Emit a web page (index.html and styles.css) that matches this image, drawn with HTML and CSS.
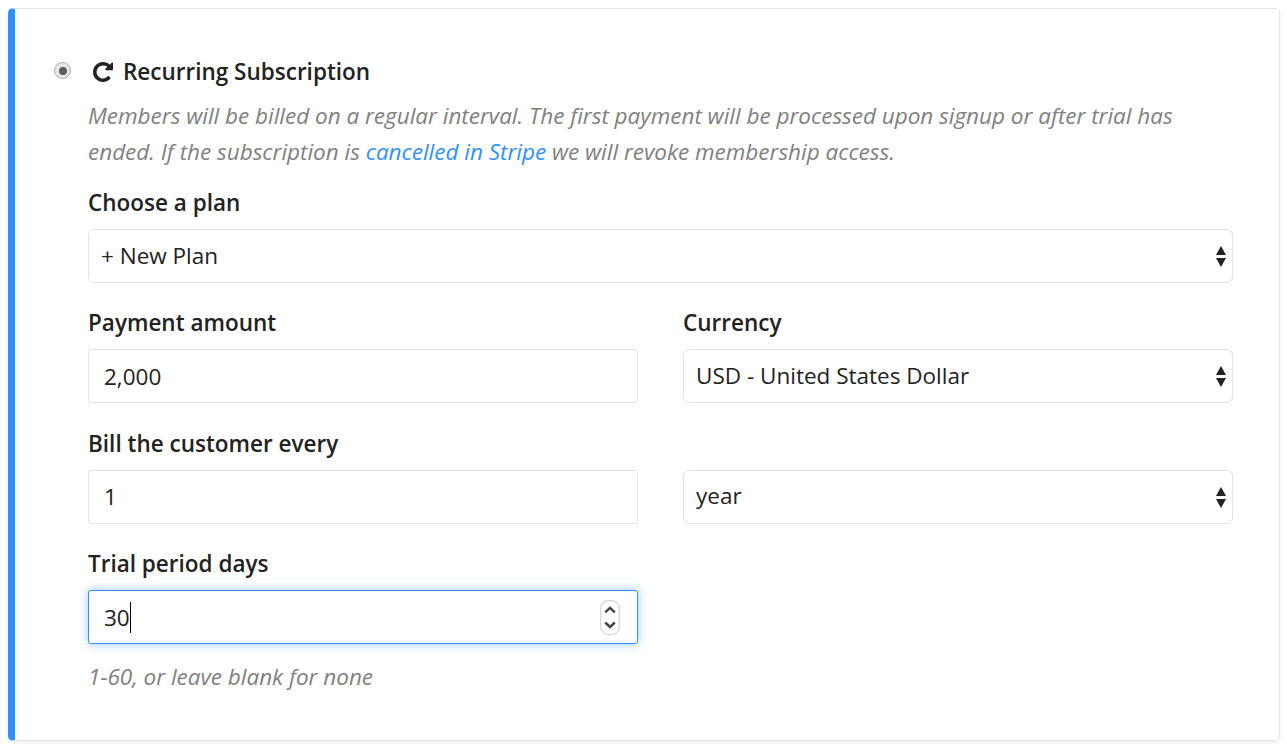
FILE: index.html
```html
<!DOCTYPE html>
<html lang="en">
<head>
    <meta charset="UTF-8">
    <meta name="viewport" content="width=device-width, initial-scale=1.0">
    <title>Subscription</title>
    <link rel="stylesheet" href="styles.css">
</head>
<body>
    <form class="card">
        <label class="option">
            <span class="radio"></span>
            <svg class="repeat-icon" viewBox="0 0 1536 1536" width="20" height="20">
                <path d="M1536 90v470q0 26-19 45t-45 19h-470q-42 0-59-40-17-39 14-69l148-148Q969 276 768 276q-104 0-190 38.500T420 420 314.500 578 276 768t38.500 190T420 1116t158 105.500T768 1260q119 0 215-48t169-143q7-10 23-12 15 0 25 9l147 138q9 8 9.500 20.500t-7.500 22.500q-109 142-264 215.500T768 1536q-156 0-298-61t-245-164-164-245T0 768t61-298 164-245T470 61 768 0q147 0 284.500 55.500T1297 212l130-152q29-31 70-14 39 17 39 44z"/>
            </svg>
            <span class="option-title">Recurring Subscription</span>
        </label>
        <div class="option-body">
            <p class="help">Members will be billed on a regular interval. The first payment will be processed upon signup or after trial has ended. If the subscription is <a href="#">cancelled in Stripe</a> we will revoke membership access.</p>

            <div class="field">
                <label class="label">Choose a plan</label>
                <div class="select"><select><option>+ New Plan</option></select></div>
            </div>

            <div class="row">
                <div class="field">
                    <label class="label">Payment amount</label>
                    <input class="input" type="text" value="2,000">
                </div>
                <div class="field">
                    <label class="label">Currency</label>
                    <div class="select"><select><option>USD - United States Dollar</option></select></div>
                </div>
            </div>

            <div class="row">
                <div class="field">
                    <label class="label">Bill the customer every</label>
                    <input class="input" type="text" value="1">
                </div>
                <div class="field field-end">
                    <div class="select"><select><option>year</option></select></div>
                </div>
            </div>

            <div class="row">
                <div class="field">
                    <label class="label">Trial period days</label>
                    <div class="input input-active">
                        <span class="value">30</span>
                        <svg class="spinner" viewBox="0 0 20 35" width="20" height="35">
                            <rect x=".75" y=".75" width="18.500" height="33.500" rx="7"/>
                            <path d="M5.200 12.300l4.800-4.500 4.800 4.500M5.200 22.500l4.800 4.500 4.800-4.500"/>
                        </svg>
                    </div>
                </div>
            </div>
            <p class="help hint">1-60, or leave blank for none</p>
        </div>
    </form>
</body>
</html>
```

FILE: styles.css
```css
* {
    box-sizing: border-box;
}

body {
    margin: 0;
    padding: 8px 7px 8px 8px;
    background: #fff;
    color: #222;
    font-family: "Open Sans", sans-serif;
    font-size: 22.5px;
    line-height: 36px;
}

.card {
    height: 733px;
    padding: 45px 46px 0 39px;
    border: 1px solid #e2e3e3;
    border-left: 7px solid #2f90ff;
    border-radius: 5px;
    box-shadow: 0 2px 4px rgba(0, 0, 0, 0.06);
}

.option {
    display: flex;
    align-items: center;
}

.radio {
    display: flex;
    align-items: center;
    justify-content: center;
    width: 17px;
    height: 17px;
    margin-bottom: 3px;
    border: 1px solid #aaa;
    border-radius: 50%;
    background: #e6e6e6;
}

.radio::after {
    content: "";
    width: 8px;
    height: 8px;
    border-radius: 50%;
    background: #5c5c5c;
}

.repeat-icon {
    margin: 0 10px 1px 22px;
    fill: #222;
}

.option-title, .label {
    font-weight: 600;
}

.option-body {
    padding-left: 34px;
}

.help {
    margin: 8px 0 15px;
    color: #808080;
    font-style: italic;
    letter-spacing: -0.016px;
}

.help a {
    color: #2f90ff;
    text-decoration: none;
}

.label {
    display: block;
    margin-bottom: 8px;
}

.row {
    display: grid;
    grid-template-columns: 1fr 1fr;
    column-gap: 45px;
    margin-top: 22.4px;
}

.field-end {
    align-self: end;
}

.input, .select select {
    display: block;
    width: 100%;
    height: 54px;
    margin: 0;
    padding: 0 15px;
    border: 1px solid #e2e3e3;
    border-radius: 3px;
    outline: none;
    background: #fff;
    color: #222;
    font: inherit;
}

.select {
    position: relative;
}

.select select {
    appearance: none;
    padding: 0 12px 1px;
    border-radius: 6px;
}

.select::before, .select::after {
    content: "";
    position: absolute;
    right: 7px;
    border-left: 5.5px solid transparent;
    border-right: 5.5px solid transparent;
}

.select::before {
    top: 17px;
    border-bottom: 9px solid #222;
}

.select::after {
    top: 29px;
    border-top: 9px solid #222;
}

.input-active {
    display: flex;
    align-items: center;
    justify-content: space-between;
    padding-right: 17px;
    border-color: #2f90ff;
    box-shadow: 0 0 10px rgba(47, 144, 255, 0.5);
}

.value {
    height: 31px;
    border-right: 1px solid #000;
    line-height: 31px;
}

.spinner {
    fill: #fff;
    stroke: #ccc;
}

.spinner path {
    fill: none;
    stroke: #444;
    stroke-width: 2.4;
}

.hint {
    margin: 15px 0 0;
}
```
